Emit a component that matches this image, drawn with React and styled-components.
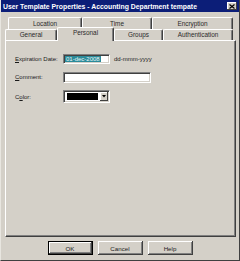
import React from 'react';
import styled, { createGlobalStyle } from 'styled-components';

const Global = createGlobalStyle`
  html, body { margin: 0; padding: 0; background: #d4d0c8; }
  body { font-family: "Liberation Sans", Arial, sans-serif; }
`;

const Window = styled.div`
  width: 240px;
  height: 261px;
  box-sizing: border-box;
  background: #d4d0c8;
  border-right: 1px solid #404040;
  border-bottom: 1px solid #404040;
  border-left: 1px solid #e8e6e0;
  display: flex;
  flex-direction: column;
`;

const TitleBar = styled.div`
  height: 12px;
  background: #0c1e78;
  display: flex;
  align-items: center;
  justify-content: space-between;
  padding: 0 2px 0 2px;
  color: #fff;
  font-weight: bold;
  font-size: 6.85px;
  white-space: nowrap;
`;

const CloseBtn = styled.div`
  width: 10px;
  height: 8px;
  background: #d4d0c8;
  box-shadow: inset -1px -1px #404040, inset 1px 1px #fff;
  display: flex;
  align-items: center;
  justify-content: center;
`;

const Body = styled.div`
  padding: 5px 3px 0 4px;
`;

const TabRow = styled.div`
  display: flex;
  height: ${(p) => p.$h}px;
  padding-left: ${(p) => p.$indent}px;
  position: relative;
`;

const Tab = styled.div`
  width: ${(p) => p.$w}px;
  box-sizing: border-box;
  border-top: 1px solid #fff;
  border-left: 1px solid #fff;
  border-right: 1px solid #404040;
  border-radius: 2px 2px 0 0;
  box-shadow: inset -1px 0 #808080;
  background: #d4d0c8;
  display: flex;
  align-items: center;
  justify-content: center;
  font-size: 6.4px;
  color: #2a2a2a;
  padding-bottom: 1px;
  ${(p) =>
    p.$active &&
    `
    margin-top: -2px;
    height: calc(100% + 3px);
    position: relative;
    z-index: 2;
    padding-bottom: 4px;
  `}
`;

const Panel = styled.div`
  width: 231px;
  height: 197px;
  box-sizing: border-box;
  border-top: 1px solid #fff;
  border-left: 1px solid #fff;
  border-right: 1px solid #404040;
  border-bottom: 1px solid #404040;
  box-shadow: inset -1px -1px #808080;
  padding: 13px 0 0 9px;
  position: relative;
`;

const Form = styled.div`
  display: grid;
  grid-template-columns: 48px auto;
  grid-template-rows: 10px 11px 13px;
  row-gap: 7.5px;
  align-items: center;
  font-size: 6px;
  color: #1a1a1a;
`;

const Label = styled.div`
  white-space: nowrap;
  u { text-decoration: underline; }
`;

const Field = styled.div`
  display: flex;
  align-items: center;
`;

const Sunken = styled.div`
  width: ${(p) => p.$w}px;
  height: ${(p) => p.$h}px;
  box-sizing: border-box;
  background: #fff;
  border-top: 1px solid #808080;
  border-left: 1px solid #808080;
  border-right: 1px solid #fff;
  border-bottom: 1px solid #fff;
  box-shadow: inset 1px 1px #404040, inset -1px -1px #d4d0c8;
  display: flex;
  align-items: center;
  padding: 1px;
`;

const Selected = styled.span`
  background: #2b8a99;
  color: #eaf6f6;
  height: 100%;
  display: flex;
  align-items: center;
  padding: 0 1px;
  font-size: 6px;
`;

const Hint = styled.span`
  margin-left: 4px;
  font-size: 6px;
`;

const Swatch = styled.div`
  flex: 1;
  height: 7px;
  margin: 0 2px 0 2px;
  background: #000;
`;

const DropBtn = styled.div`
  width: 8px;
  height: 9px;
  background: #d4d0c8;
  box-shadow: inset -1px -1px #404040, inset 1px 1px #fff;
  display: flex;
  align-items: center;
  justify-content: center;
`;

const ButtonBar = styled.div`
  display: flex;
  justify-content: center;
  gap: 5px;
  margin-top: 4px;
  padding-right: 1px;
`;

const Button = styled.div`
  width: 45px;
  height: 14px;
  box-sizing: border-box;
  background: #d4d0c8;
  font-size: 6.2px;
  color: #222;
  display: flex;
  align-items: center;
  justify-content: center;
  box-shadow: inset -1px -1px #404040, inset 1px 1px #fff, inset -2px -2px #808080;
  ${(p) => p.$default && `border: 1px solid #000;`}
`;

export default function App() {
  return (
    <>
      <Global />
      <Window>
        <TitleBar>
          <span>User Template Properties - Accounting Department tempate</span>
          <CloseBtn>
            <svg width="6" height="5" viewBox="0 0 6 5">
              <path d="M0.5 0.5 L5.5 4.5 M5.5 0.5 L0.5 4.5" stroke="#000" strokeWidth="1.2" />
            </svg>
          </CloseBtn>
        </TitleBar>
        <Body>
          <TabRow $h={12} $indent={3}>
            <Tab $w={74}>Location</Tab>
            <Tab $w={70}>Time</Tab>
            <Tab $w={81}>Encryption</Tab>
          </TabRow>
          <TabRow $h={11} $indent={0}>
            <Tab $w={52}>General</Tab>
            <Tab $w={57} $active>Personal</Tab>
            <Tab $w={49}>Groups</Tab>
            <Tab $w={70}>Authentication</Tab>
          </TabRow>
          <Panel>
            <Form>
              <Label><u>E</u>xpiration Date:</Label>
              <Field>
                <Sunken $w={47} $h={10}>
                  <Selected>01-dec-2008</Selected>
                </Sunken>
                <Hint>dd-mmm-yyyy</Hint>
              </Field>
              <Label><u>C</u>omment:</Label>
              <Field>
                <Sunken $w={88} $h={11} />
              </Field>
              <Label>C<u>o</u>lor:</Label>
              <Field>
                <Sunken $w={47} $h={13}>
                  <Swatch />
                  <DropBtn>
                    <svg width="4" height="3" viewBox="0 0 4 3">
                      <path d="M0 0 H4 L2 2.5 Z" fill="#000" />
                    </svg>
                  </DropBtn>
                </Sunken>
              </Field>
            </Form>
          </Panel>
          <ButtonBar>
            <Button $default>OK</Button>
            <Button>Cancel</Button>
            <Button>Help</Button>
          </ButtonBar>
        </Body>
      </Window>
    </>
  );
}
